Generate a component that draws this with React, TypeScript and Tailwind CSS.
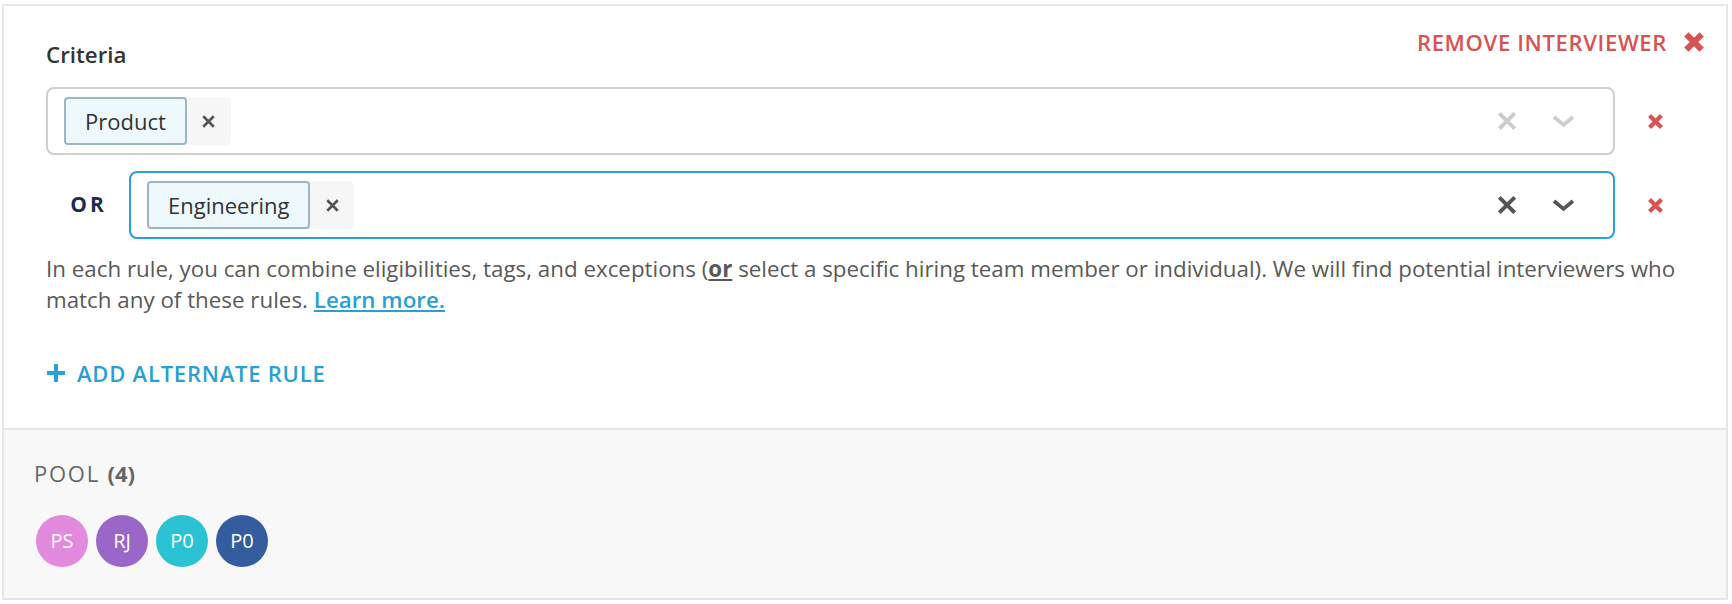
import React from "react";

type IconProps = { size: number; stroke: number; color: string };

const Cross = ({ size, stroke, color }: IconProps) => (
  <svg width={size} height={size} viewBox="0 0 20 20" fill="none">
    <path d="M3 3 L17 17 M17 3 L3 17" stroke={color} strokeWidth={stroke} />
  </svg>
);

const Chevron = ({ color }: { color: string }) => (
  <svg width="23" height="14" viewBox="0 0 23 14" fill="none">
    <path d="M2 3 L11.5 11 L21 3" stroke={color} strokeWidth="3.6" />
  </svg>
);

type Rule = { tag: string; focused: boolean };

const rules: Rule[] = [
  { tag: "Product", focused: false },
  { tag: "Engineering", focused: true },
];

const avatars = [
  { label: "PS", color: "bg-[#e28ade]" },
  { label: "RJ", color: "bg-[#9a67c9]" },
  { label: "P0", color: "bg-[#2bc3d3]" },
  { label: "P0", color: "bg-[#345da0]" },
];

function RuleRow({ rule, first }: { rule: Rule; first: boolean }) {
  return (
    <div className="flex items-center">
      {!first && (
        <div className="w-[83px] shrink-0 pl-[2px] text-center text-[21px] font-bold tracking-[0.14em] text-[#1d2d4f]">
          OR
        </div>
      )}
      <div
        className={`flex h-[68px] flex-1 items-center rounded-[8px] border-2 bg-white pl-[16px] pr-[38px] ${
          rule.focused ? "border-[#2aa0d4]" : "border-[#cfcfcf]"
        }`}
      >
        <div className="flex h-[48px] items-stretch rounded-[5px] bg-[#f6f6f6]">
          <span className="flex items-center rounded-[4px] border-2 border-[#9db6c4] bg-[#eef9fd] px-[19px] text-[22px] text-[#333]">
            {rule.tag}
          </span>
          <span className="flex w-[44px] items-center justify-center">
            <Cross size={15} stroke={3.6} color="#555" />
          </span>
        </div>
        <div className="ml-auto flex items-center gap-[34px]">
          <Cross size={22} stroke={3.6} color={rule.focused ? "#555" : "#cccccc"} />
          <Chevron color={rule.focused ? "#555" : "#cccccc"} />
        </div>
      </div>
      <div className="flex w-[80px] shrink-0 justify-center">
        <Cross size={17} stroke={5} color="#d65353" />
      </div>
    </div>
  );
}

export default function App() {
  return (
    <div className="pl-[2px] pt-[4px] font-['Open_Sans',sans-serif]">
      <div className="w-[1726px] border-2 border-[#e6e6e6]">
        <div className="bg-white pb-[40px] pl-[42px] pr-[31px] pt-[21px]">
          <div className="-mr-[10px] mb-[17px] flex items-start justify-between">
            <div className="mt-[13px] text-[22.3px] font-semibold leading-[30px] text-[#333]">
              Criteria
            </div>
            <button className="flex items-center gap-[16px] text-[22px] font-semibold uppercase leading-[30px] tracking-[0.03em] text-[#d65353]">
              REMOVE INTERVIEWER
              <Cross size={22} stroke={5.5} color="#d65353" />
            </button>
          </div>

          <div className="flex flex-col gap-[16px]">
            {rules.map((r, i) => (
              <RuleRow key={r.tag} rule={r} first={i === 0} />
            ))}
          </div>

          <p className="mt-[14px] w-[1660px] text-[22.35px] leading-[31px] text-[#595959]">
            In each rule, you can combine eligibilities, tags, and exceptions (
            <span className="font-bold underline">or</span> select a specific hiring team member or
            individual). We will find potential interviewers who match any of these rules.{" "}
            <a className="font-semibold text-[#2a9fd3] underline">Learn more.</a>
          </p>

          <button className="mt-[43px] flex items-center gap-[11px] text-[22px] font-semibold uppercase leading-[30px] tracking-[0.035em] text-[#2a9fd3]">
            <svg width="20" height="20" viewBox="0 0 20 20" fill="none">
              <path d="M10 1 V19 M1 10 H19" stroke="#2a9fd3" strokeWidth="4" />
            </svg>
            ADD ALTERNATE RULE
          </button>
        </div>

        <div className="border-t-2 border-[#e6e6e6] bg-[#f8f8f8] pb-[31px] pl-[30px] pt-[28px]">
          <div className="text-[22px] leading-[30px] tracking-[0.08em] text-[#666]">
            POOL <span className="font-bold tracking-normal">(4)</span>
          </div>
          <div className="mt-[27px] flex gap-[8px] pl-[2px]">
            {avatars.map((a, i) => (
              <div
                key={i}
                className={`flex h-[52px] w-[52px] items-center justify-center rounded-full text-[20px] text-white ${a.color}`}
              >
                {a.label}
              </div>
            ))}
          </div>
        </div>
      </div>
    </div>
  );
}
